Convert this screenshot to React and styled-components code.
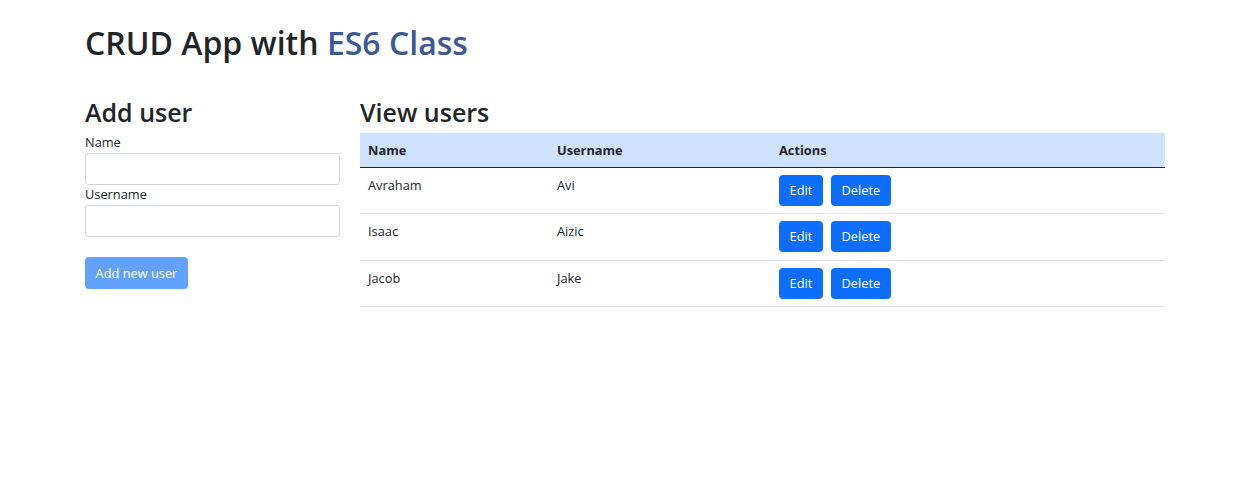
import React from 'react';
import styled, { createGlobalStyle } from 'styled-components';

const GlobalStyle = createGlobalStyle`
  body {
    margin: 0;
    background: #fff;
    color: #212529;
    font-family: "Open Sans", "Noto Sans", sans-serif;
    font-size: 12.8px;
    line-height: 1.5;
  }
  * { box-sizing: border-box; }
`;

const Container = styled.div`
  width: 1080px;
  margin-left: 85px;
  padding-top: 24px;
`;

const Title = styled.h1`
  margin: 0 0 35px;
  font-size: 32px;
  font-weight: 600;
  line-height: 1.2;
`;

const Accent = styled.span`
  color: #3b5998;
`;

const Row = styled.div`
  display: flex;
  gap: 20px;
`;

const Column = styled.div`
  width: ${(p) => p.width || 'auto'};
  flex: ${(p) => (p.width ? 'none' : '1')};
`;

const Heading = styled.h2`
  margin: 0 0 6px;
  font-size: 25px;
  font-weight: 600;
  line-height: 1.2;
`;

const Form = styled.form`
  display: flex;
  flex-direction: column;
`;

const Label = styled.label`
  font-size: 12.8px;
  line-height: 18px;
  margin-bottom: 2px;
`;

const Input = styled.input`
  height: 32px;
  width: 100%;
  border: 1px solid #ced4da;
  border-radius: 3px;
  padding: 4px 10px;
  font: inherit;
  margin-bottom: ${(p) => p.gap || '0'};
`;

const Button = styled.button`
  height: ${(p) => p.height || '31px'};
  padding: 0 ${(p) => p.pad || '9.6px'};
  border: 1px solid ${(p) => (p.disabled ? '#62a1fe' : '#0d6efd')};
  border-radius: 3.5px;
  background: ${(p) => (p.disabled ? '#62a1fe' : '#0d6efd')};
  color: #fff;
  font-family: inherit;
  font-size: 12.8px;
  line-height: 1.5;
  cursor: pointer;
`;

const Table = styled.table`
  width: 100%;
  border-collapse: collapse;
`;

const HeadCell = styled.th`
  background: #cfe2ff;
  text-align: left;
  font-weight: 700;
  padding: 7px 8px;
  height: 34px;
  border-bottom: 1.6px solid #212529;
  width: ${(p) => p.width || 'auto'};
`;

const Cell = styled.td`
  padding: 7px 8px 7.4px;
  vertical-align: top;
  border-bottom: 1px solid #dee2e6;
`;

const CellText = styled.div`
  padding-top: 1px;
`;

const Actions = styled.div`
  display: flex;
  gap: 8px;
`;

const users = [
  { id: 1, name: 'Avraham', username: 'Avi' },
  { id: 2, name: 'Isaac', username: 'Aizic' },
  { id: 3, name: 'Jacob', username: 'Jake' },
];

export default function App() {
  return (
    <>
      <GlobalStyle />
      <Container>
        <Title>
          CRUD App with <Accent>ES6 Class</Accent>
        </Title>
        <Row>
          <Column width="255px">
            <Heading>Add user</Heading>
            <Form onSubmit={(e) => e.preventDefault()}>
              <Label>Name</Label>
              <Input type="text" name="name" />
              <Label>Username</Label>
              <Input type="text" name="username" gap="20px" />
              <div>
                <Button disabled height="32px" pad="9.6px">Add new user</Button>
              </div>
            </Form>
          </Column>
          <Column>
            <Heading>View users</Heading>
            <Table>
              <thead>
                <tr>
                  <HeadCell width="189px">Name</HeadCell>
                  <HeadCell width="222px">Username</HeadCell>
                  <HeadCell>Actions</HeadCell>
                </tr>
              </thead>
              <tbody>
                {users.map((user) => (
                  <tr key={user.id}>
                    <Cell><CellText>{user.name}</CellText></Cell>
                    <Cell><CellText>{user.username}</CellText></Cell>
                    <Cell>
                      <Actions>
                        <Button>Edit</Button>
                        <Button>Delete</Button>
                      </Actions>
                    </Cell>
                  </tr>
                ))}
              </tbody>
            </Table>
          </Column>
        </Row>
      </Container>
    </>
  );
}
